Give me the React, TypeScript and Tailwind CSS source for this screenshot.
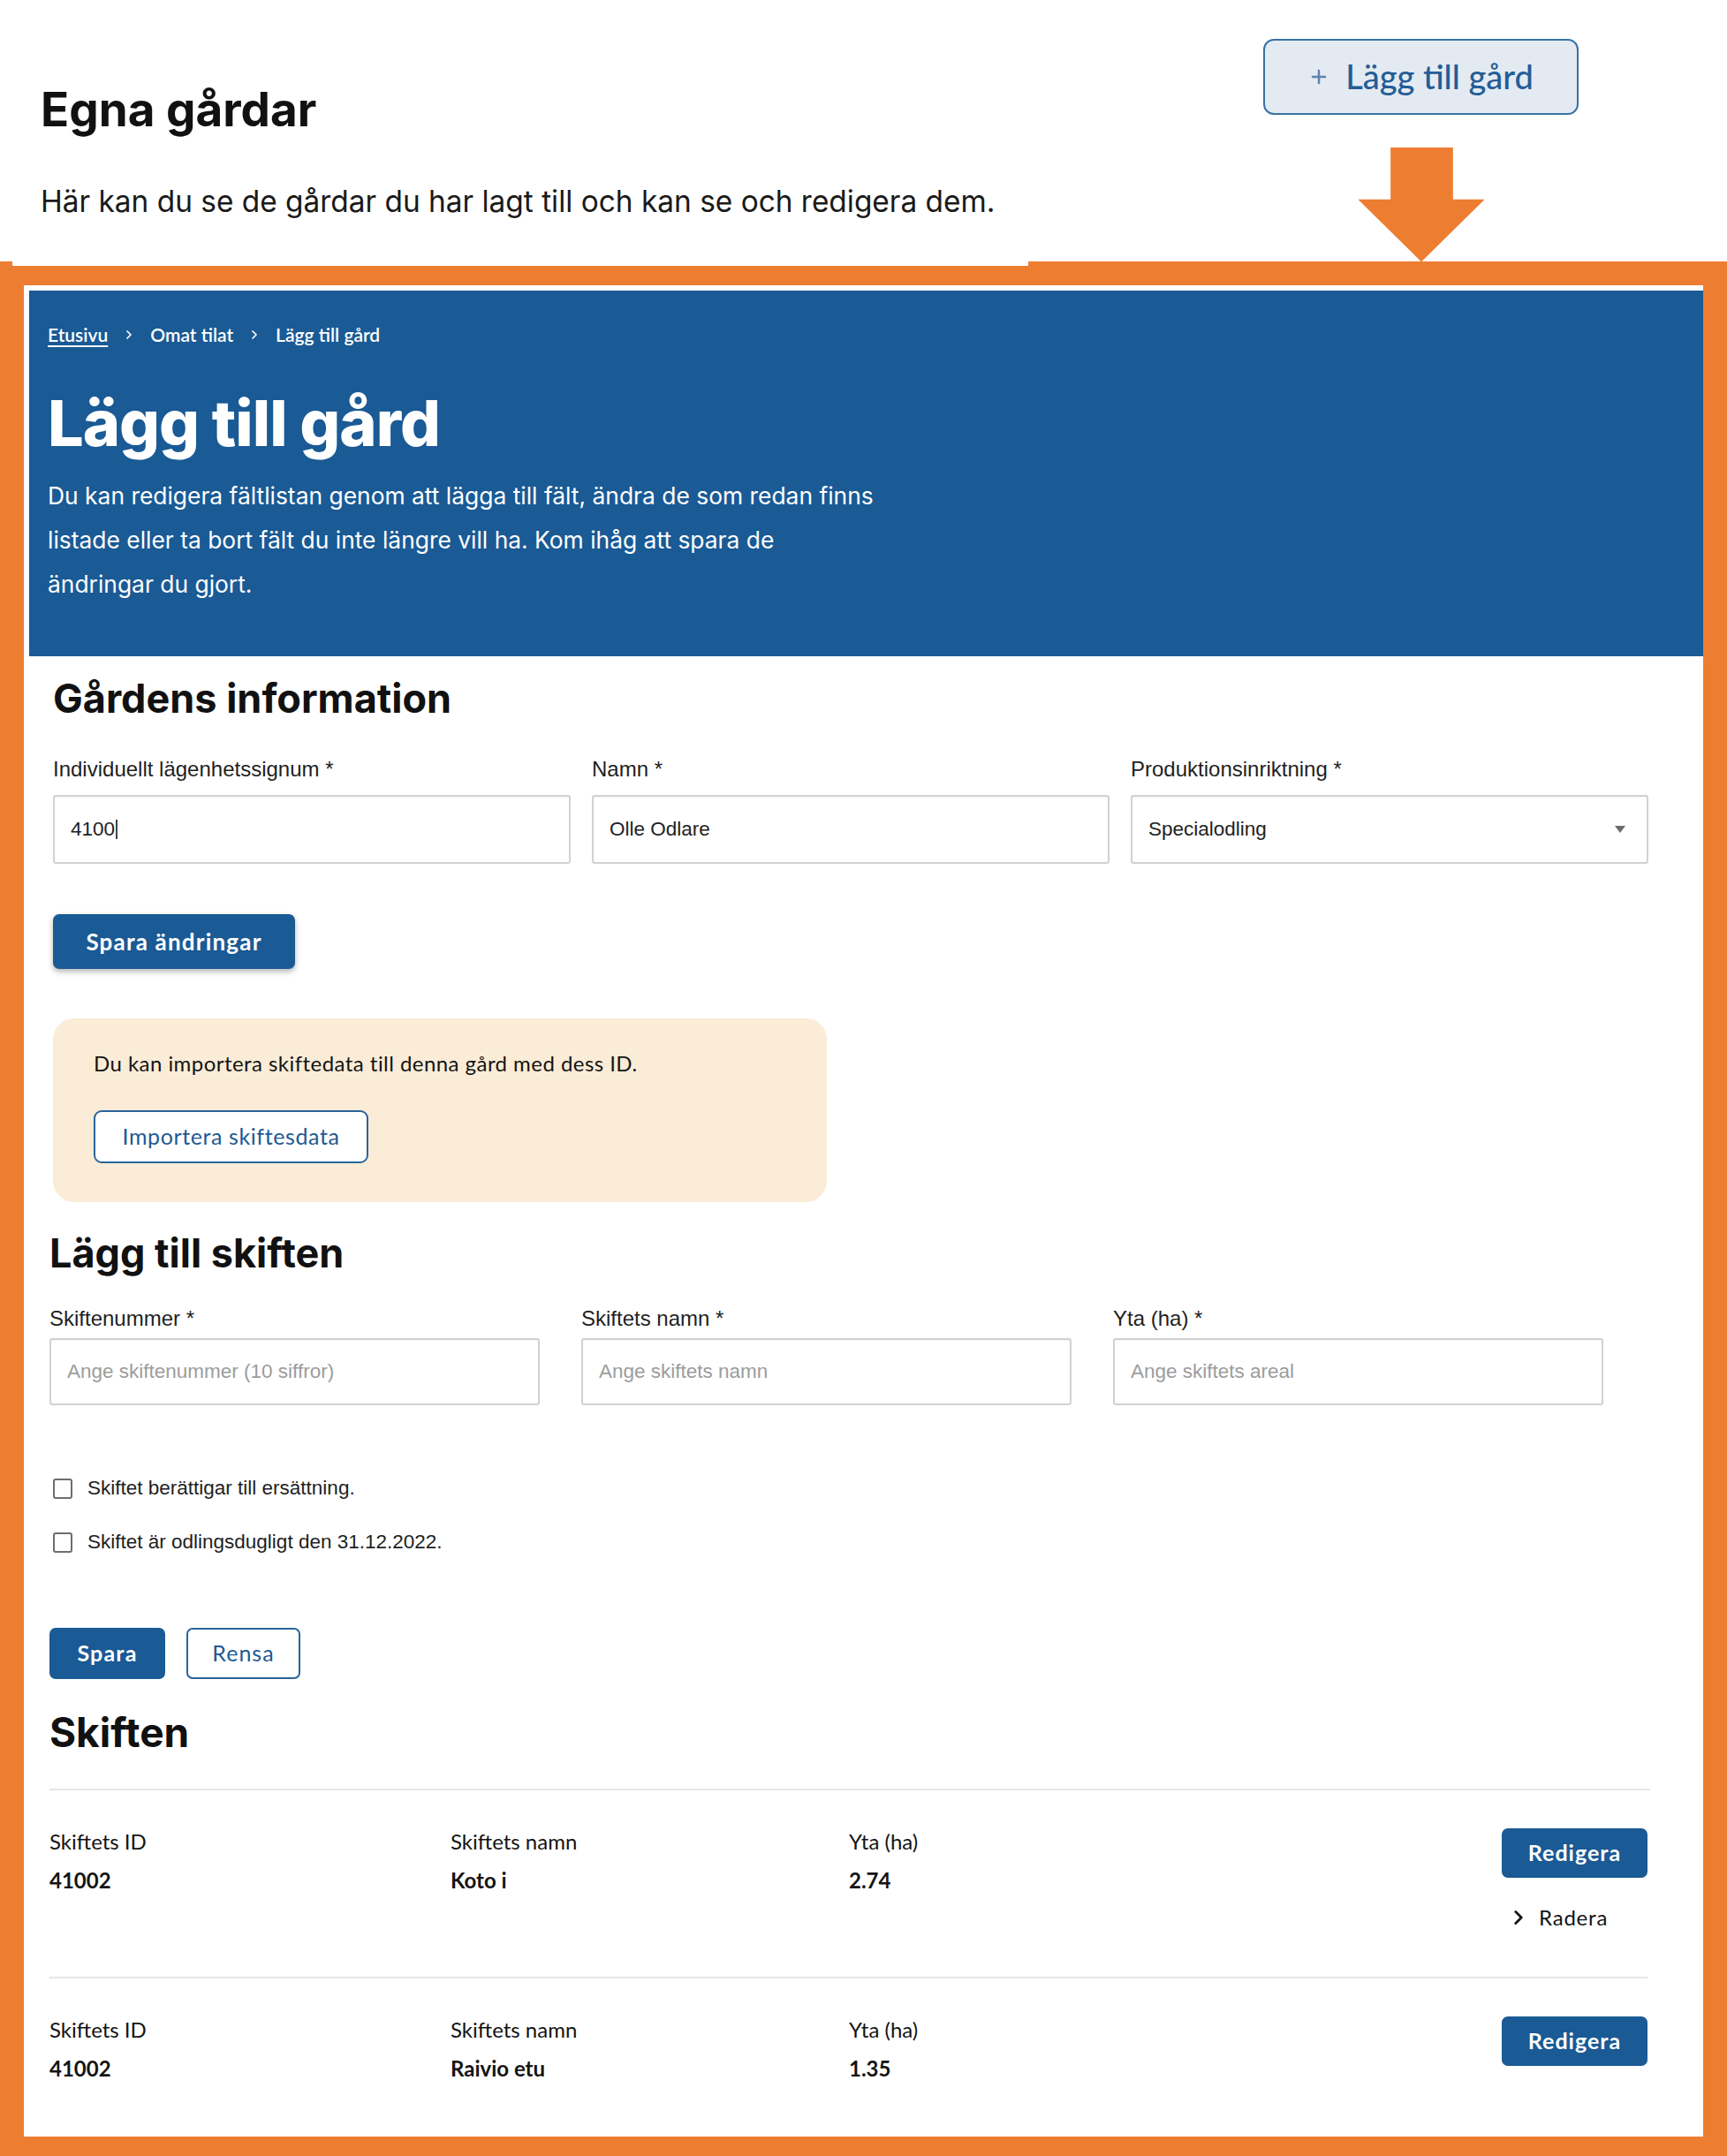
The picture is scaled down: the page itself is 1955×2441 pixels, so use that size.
import { ChevronRight, Plus } from "lucide-react";

const geo = "[font-family:Lato,'Open_Sans',sans-serif]";
const inter = "[font-family:Inter,'Liberation_Sans',sans-serif]";
const arial = "[font-family:'Liberation_Sans',Arial,sans-serif]";

function Field({ label, value, placeholder, select, h }: { label: string; value?: string; placeholder?: string; select?: boolean; h: string }) {
  return (
    <div className="flex flex-col">
      <label className={`${arial} text-[24px] leading-[24px] text-[#1f1f1f]`}>{label}</label>
      <div
        className={`${h} mt-[var(--gap)] flex items-center justify-between rounded-[3px] border-2 border-[#d2d2d2] bg-white px-[18px] shadow-[inset_0_1px_1px_rgba(0,0,0,0.06)]`}
      >
        {value !== undefined ? (
          <span className={`${arial} flex items-center text-[22.5px] text-[#222]`}>
            {value}
            {value === "4100" && <span className="ml-[1px] h-[22px] w-[2px] bg-[#444]" />}
          </span>
        ) : (
          <span className={`${arial} text-[22.5px] text-[#9c9c9c]`}>{placeholder}</span>
        )}
        {select && (
          <svg width="12" height="8" viewBox="0 0 12 8" className="mr-[6px]">
            <path d="M0 0 H12 L6 8 Z" fill="#6b6b6b" />
          </svg>
        )}
      </div>
    </div>
  );
}

function Checkbox({ label }: { label: string }) {
  return (
    <div className="flex h-[30px] items-center gap-[17px] pl-[4px]">
      <span className="h-[23px] w-[22px] rounded-[3px] border-2 border-[#6e6e6e] bg-white" />
      <span className={`${arial} text-[22.5px] text-[#1f1f1f]`}>{label}</span>
    </div>
  );
}

function Row({ id, name, area, radera }: { id: string; name: string; area: string; radera?: boolean }) {
  return (
    <div className="grid grid-cols-[454px_451px_1fr_auto] border-b-2 border-[#e6e6e6] pt-[43px] pb-[53px] last:border-b-0">
      {[
        ["Skiftets ID", id],
        ["Skiftets namn", name],
        ["Yta (ha)", area],
      ].map(([l, v]) => (
        <div key={l} className={`${geo} flex flex-col text-[24px] text-[#141414]`}>
          <span className="leading-[30px]">{l}</span>
          <span className="mt-[14px] font-bold leading-[30px]">{v}</span>
        </div>
      ))}
      <div className="flex flex-col items-start">
        <button className={`${geo} h-[56px] w-[165px] rounded-[7px] bg-[#1a5a95] text-[25px] font-bold tracking-[1px] text-white`}>Redigera</button>
        {radera && (
          <div className={`${geo} ml-[6px] mt-[31px] flex items-center gap-[10px] text-[24px] leading-[28px] tracking-[0.8px] text-[#141414]`}>
            <ChevronRight size={26} strokeWidth={2.6} />
            <span>Radera</span>
          </div>
        )}
      </div>
    </div>
  );
}

export default function App() {
  return (
    <div className={`relative h-[2441px] w-[1955px] overflow-hidden bg-white ${arial} text-[#111]`}>
      {/* header */}
      <div className="flex h-[296px] justify-between">
        <div className="pl-[46px] pt-[93px]">
          <h1 className={`${inter} text-[53px] font-bold leading-[62px] text-[#111]`}>Egna gårdar</h1>
          <p className={`${inter} mt-[53px] text-[33.4px] leading-[40px] text-[#1a1a1a]`}>
            Här kan du se de gårdar du har lagt till och kan se och redigera dem.
          </p>
        </div>
        <div className="mr-[168px] flex flex-col items-center pt-[44px]">
          <button className="flex h-[86px] w-[357px] items-center justify-center gap-[18px] rounded-[12px] border-2 border-[#3a71a6] bg-[#e3eaf2]">
            <Plus size={24} strokeWidth={2.5} className="text-[#5d83aa]" />
            <span className={`${geo} text-[38px] font-medium text-[#245d96]`}>Lägg till gård</span>
          </button>
          <svg className="mt-[37px]" width="144" height="130" viewBox="0 0 144 130">
            <path d="M37 0 H108 V59 H144 L72 130 L0 59 H37 Z" fill="#ed7d31" />
          </svg>
        </div>
      </div>
      <div className="absolute left-[14px] top-[296px] h-[5px] w-[1150px] bg-white" />

      {/* frame */}
      <div className="h-[2145px] border-x-[27px] border-b-[28px] border-t-[27px] border-[#ed7d31]">
        <div className="h-full bg-white">
          {/* blue banner */}
          <section className="ml-[6px] mt-[6px] bg-[#1a5a95] pb-[57px] pl-[21px] pt-[38px] text-white">
            <nav className={`${geo} flex h-[24px] items-center text-[21px] font-semibold leading-[24px]`}>
              <span className="underline decoration-[2px] underline-offset-[4px]">Etusivu</span>
              <ChevronRight size={16} strokeWidth={2.6} className="mx-[16px]" />
              <span>Omat tilat</span>
              <ChevronRight size={16} strokeWidth={2.6} className="mx-[16px]" />
              <span>Lägg till gård</span>
            </nav>
            <h1 className={`${inter} mt-[52px] text-[72px] font-extrabold leading-[72px] tracking-[-1px]`}>Lägg till gård</h1>
            <p className={`${inter} mt-[21px] text-[26.4px] leading-[50px]`}>
              Du kan redigera fältlistan genom att lägga till fält, ändra de som redan finns
              <br />
              listade eller ta bort fält du inte längre vill ha. Kom ihåg att spara de
              <br />
              ändringar du gjort.
            </p>
          </section>

          {/* Gårdens information */}
          <section className="pl-[33px]">
            <h2 className={`${inter} mt-[21px] text-[45px] font-bold leading-[54px] text-[#111]`}>Gårdens information</h2>
            <div className="mt-[41px] grid w-[1806px] grid-cols-3 gap-[24px] [--gap:17px]">
              <Field label="Individuellt lägenhetssignum *" value="4100" h="h-[78px]" />
              <Field label="Namn *" value="Olle Odlare" h="h-[78px]" />
              <Field label="Produktionsinriktning *" value="Specialodling" select h="h-[78px]" />
            </div>
            <button
              className={`${geo} mt-[57px] h-[62px] w-[274px] rounded-[7px] bg-[#1a5a95] text-[26px] font-bold tracking-[1.2px] text-white shadow-[0_3px_6px_rgba(0,0,0,0.3)]`}
            >
              Spara ändringar
            </button>
            <div className="mt-[56px] flex h-[208px] w-[876px] flex-col items-start rounded-[24px] bg-[#faecd7] pl-[46px] pt-[36px]">
              <p className={`${geo} text-[24px] leading-[30px] tracking-[0.45px] text-[#141414]`}>Du kan importera skiftedata till denna gård med dess ID.</p>
              <button
                className={`${geo} mt-[38px] h-[60px] w-[311px] rounded-[9px] border-2 border-[#2a649c] bg-white text-[25px] tracking-[0.6px] text-[#1d5a94]`}
              >
                Importera skiftesdata
              </button>
            </div>
          </section>

          {/* Lägg till skiften */}
          <section className="pl-[29px] pr-[60px]">
            <h2 className={`${inter} mt-[31px] text-[45px] font-bold leading-[53px] text-[#111]`}>Lägg till skiften</h2>
            <div className="mt-[36px] grid w-[1759px] grid-cols-3 gap-[47px] [--gap:10px]">
              <Field label="Skiftenummer *" placeholder="Ange skiftenummer (10 siffror)" h="h-[76px]" />
              <Field label="Skiftets namn *" placeholder="Ange skiftets namn" h="h-[76px]" />
              <Field label="Yta (ha) *" placeholder="Ange skiftets areal" h="h-[76px]" />
            </div>
            <div className="mt-[79px] flex flex-col gap-[31px]">
              <Checkbox label="Skiftet berättigar till ersättning." />
              <Checkbox label="Skiftet är odlingsdugligt den 31.12.2022." />
            </div>
            <div className="mt-[82px] flex gap-[24px]">
              <button className={`${geo} h-[58px] w-[131px] rounded-[7px] bg-[#1a5a95] text-[25px] font-bold tracking-[1.2px] text-white`}>Spara</button>
              <button className={`${geo} h-[58px] w-[129px] rounded-[7px] border-2 border-[#2a649c] bg-white text-[25px] tracking-[1px] text-[#1d5a94]`}>Rensa</button>
            </div>

            {/* Skiften */}
            <h2 className={`${inter} mt-[34px] text-[46px] font-bold leading-[53px] text-[#111]`}>Skiften</h2>
            <div className="mt-[37px] border-t-2 border-[#e6e6e6] pr-[3px]">
              <Row id="41002" name="Koto i" area="2.74" radera />
              <Row id="41002" name="Raivio etu" area="1.35" />
            </div>
          </section>
        </div>
      </div>
    </div>
  );
}
